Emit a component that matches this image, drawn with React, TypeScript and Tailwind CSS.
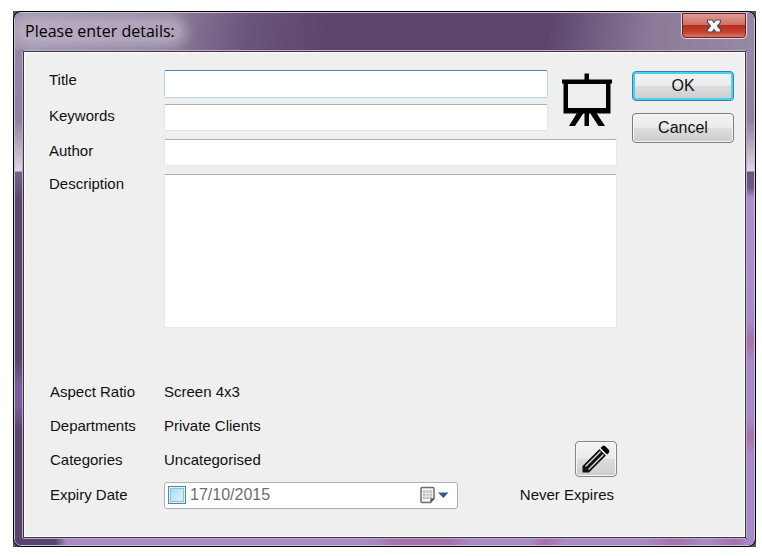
import { useState } from "react";
import type { ReactNode } from "react";

const fieldClass =
  "block w-full rounded-[2px] border border-[#e2e6ee] border-t-[#aeaeb6] bg-white px-1 text-[15px] text-black outline-none";

const buttonClass =
  "rounded-[4px] border bg-[linear-gradient(to_bottom,#f3f3f3_0%,#ebebeb_48%,#dcdcdc_52%,#cecece_100%)]";

function EaselIcon() {
  return (
    <svg viewBox="0 0 52 54" className="h-[54px] w-[52px]" aria-hidden="true">
      <path d="M23.500 0.500h4.500v6h23v4h-1.500v30h-47v-30H1v-4h22.500zM7 11v24h38V11z" fill="#000" fillRule="evenodd" />
      <path d="M23.500 40h4.500v13h-4.500zM16 40h6.500L14 53H8zM29 40h6.500l8.500 13h-6.500z" fill="#000" />
    </svg>
  );
}

function PencilIcon() {
  return (
    <svg viewBox="0 0 30 30" className="h-[30px] w-[30px]" aria-hidden="true">
      <path d="M1.500 28.500v-6.500L18.500 5l6.500 6.500L8 28.500z" fill="#111" />
      <path d="M4.500 22.500L19.500 7.500M7.500 25.500L22.500 10.500" stroke="#dedede" strokeWidth="1.300" />
      <path d="M19.500 4l2-2q1.500-1 3 .5l3 3q1.500 1.500 .5 3l-2 2z" fill="#000" />
      <path d="M18.800 4.500l6.700 6.700" stroke="#e8e8e8" strokeWidth="1.200" />
    </svg>
  );
}

function CalendarIcon() {
  return (
    <svg viewBox="0 0 30 18" className="h-[18px] w-[30px]" aria-hidden="true">
      <path d="M3 1.500h11q1 0 1 1v10l-3.500 4H3q-1 0-1-1v-13q0-1 1-1z" fill="#f4f4f4" stroke="#766b68" strokeWidth="1.500" />
      <path d="M4 4.500h9v8.500H4z" fill="#b5bdc9" />
      <path d="M4 7.300h9M4 10.200h9M7 4.500v8.500M10 4.500v8.500" stroke="#f4f6f8" strokeWidth=".8" />
      <path d="M15.500 12.500h-4v4.500z" fill="#574e4c" />
      <path d="M19 6.500h10.500L24.300 12z" fill="#3a5590" />
    </svg>
  );
}

function CloseIcon() {
  return (
    <svg viewBox="0 0 16 14" className="h-[14px] w-4" aria-hidden="true">
      <path
        d="M1.500 1h4.500L8 3.500 10 1h4.500v2.500L11.500 7l3 3.500V13H10L8 10.500 6 13H1.500v-2.500L4.500 7l-3-3.500z"
        fill="#f7f7f7"
        stroke="#565064"
        strokeWidth="1.200"
        strokeLinejoin="round"
      />
    </svg>
  );
}

function InfoRow({ label, children }: { label: string; children: ReactNode }) {
  return (
    <div className="flex h-[34px] items-center">
      <dt className="w-[114px] shrink-0">{label}</dt>
      <dd>{children}</dd>
    </div>
  );
}

export default function App() {
  const [hasExpiry, setHasExpiry] = useState(false);
  const [date, setDate] = useState("17/10/2015");

  return (
    <main className="min-h-screen bg-white pt-[11px] pr-[6px] pb-[9px] pl-[13px] font-['Liberation_Sans',Arial,sans-serif] text-[15px] text-[#111]">
      <div className="bg-[#55565a]">
        <section
          aria-labelledby="dialog-title"
          className="overflow-hidden rounded-[8px] border border-black bg-[#5c466d]"
        >
          <div className="overflow-hidden rounded-[7px] border border-[#c9c0d2]">
            <header className="flex h-[37px] items-start justify-between bg-[linear-gradient(100deg,#a093ae_0%,#8f809d_20%,#69547c_32%,#5c466d_42%,#5c466d_72%,#8b7b99_86%,#9788a6_100%)] pr-[7px]">
              <h1
                id="dialog-title"
                className="mt-[8px] ml-[4px] rounded-full bg-[#c5bccd]/60 px-[6px] font-['Open_Sans','Noto_Sans',sans-serif] text-[16px] leading-5 text-black shadow-[0_0_12px_6px_rgba(197,188,205,0.6)]"
              >
                Please enter details:
              </h1>
              <button
                type="button"
                aria-label="Close"
                className="flex h-[26px] w-[66px] items-center justify-center rounded-b-[5px] border border-t-0 border-[#f0d5d5] bg-[linear-gradient(to_bottom,#dfa095_0%,#cf7264_46%,#b8301d_50%,#c5402b_75%,#dc8068_100%)] shadow-[inset_0_0_0_1px_#5d2630]"
              >
                <CloseIcon />
              </button>
            </header>

            <div className="flex">
              <div className="w-[7px] shrink-0 bg-[linear-gradient(to_bottom,#9787a7_0,#9080a0_70px,#ddd7e2_121px,#75628a_122px,#5c446e_150px,#5a436c_310px,#7a5d9c_335px,#7a5d9c_355px,#5a436c_380px)]" />
              <div className="min-w-0 flex-1 rounded-[2px] border border-[#b9aec4]">
                <div className="border border-[#3d3246]">
                  <form
                    className="flex items-start border border-white bg-[#efefef] pt-[17px] pr-[10px] pb-[23px] pl-6"
                    onSubmit={(e) => e.preventDefault()}
                  >
                    <div className="min-w-0 flex-1">
                      <div className="flex">
                        <div className="min-w-0 flex-1">
                          <div className="mb-[6px] flex">
                            <label htmlFor="title" className="w-[115px] shrink-0 leading-5">
                              Title
                            </label>
                            <input
                              id="title"
                              type="text"
                              className="block h-7 w-full rounded-[2px] border border-[#b5d8e9] border-t-[#4a82b4] bg-white px-1 outline-none"
                            />
                          </div>
                          <div className="flex">
                            <label htmlFor="keywords" className="w-[115px] shrink-0 leading-6">
                              Keywords
                            </label>
                            <input id="keywords" type="text" className={`${fieldClass} h-[27px]`} />
                          </div>
                        </div>
                        <div className="flex w-[69px] shrink-0 justify-end pt-[3px] pr-1">
                          <EaselIcon />
                        </div>
                      </div>
                      <div className="mt-2 flex">
                        <label htmlFor="author" className="w-[115px] shrink-0 leading-6">
                          Author
                        </label>
                        <input id="author" type="text" className={`${fieldClass} h-[27px]`} />
                      </div>
                      <div className="mt-2 flex">
                        <label htmlFor="description" className="w-[115px] shrink-0 leading-5">
                          Description
                        </label>
                        <textarea id="description" className={`${fieldClass} h-[154px] resize-none`} />
                      </div>

                      <div className="mt-[47px] flex items-end justify-between pl-px">
                        <div>
                          <dl>
                            <InfoRow label="Aspect Ratio">Screen 4x3</InfoRow>
                            <InfoRow label="Departments">Private Clients</InfoRow>
                            <InfoRow label="Categories">Uncategorised</InfoRow>
                          </dl>
                          <div className="flex h-9 items-center">
                            <label htmlFor="expiry" className="w-[114px] shrink-0">
                              Expiry Date
                            </label>
                            <div className="flex h-[27px] w-[294px] items-center rounded-[3px] border border-[#b0b0b0] bg-white pr-2 pl-[3px]">
                              <input
                                type="checkbox"
                                aria-label="Set expiry date"
                                checked={hasExpiry}
                                onChange={(e) => setHasExpiry(e.target.checked)}
                                className="h-[18px] w-[18px] shrink-0 appearance-none border border-[#5586a3] bg-[linear-gradient(135deg,#a5d5f3,#e8f7fe)] shadow-[inset_0_0_0_1px_#dff2fc,inset_0_0_0_2px_#8cc4e6] checked:bg-[#3a7fb0]"
                              />
                              <input
                                id="expiry"
                                type="text"
                                value={date}
                                onChange={(e) => setDate(e.target.value)}
                                className="ml-1 min-w-0 flex-1 bg-transparent text-[16px] text-[#6d6d6d] outline-none"
                              />
                              <button type="button" aria-label="Open calendar">
                                <CalendarIcon />
                              </button>
                            </div>
                          </div>
                        </div>
                        <div className="flex flex-col items-end">
                          <button
                            type="button"
                            aria-label="Edit categories"
                            className={`${buttonClass} flex h-9 w-[42px] items-center justify-center border-[#858585] shadow-[inset_0_0_0_1px_#f8f8f8]`}
                          >
                            <PencilIcon />
                          </button>
                          <p className="flex h-9 items-center pr-[3px]">Never Expires</p>
                        </div>
                      </div>
                    </div>

                    <div className="ml-[15px] flex w-[102px] shrink-0 flex-col gap-3 pt-px">
                      <button
                        type="submit"
                        className={`${buttonClass} h-[30px] border-[#3b7fae] pb-px text-[16px] shadow-[inset_0_0_0_2px_#48d0f5]`}
                      >
                        OK
                      </button>
                      <button
                        type="button"
                        className={`${buttonClass} h-[30px] border-[#7c7c7c] pb-px text-[16px] shadow-[inset_0_0_0_1px_#f8f8f8]`}
                      >
                        Cancel
                      </button>
                    </div>
                  </form>
                </div>
              </div>
              <div className="w-[7px] shrink-0 bg-[linear-gradient(to_bottom,#9787a7_0,#9080a0_70px,#ddd7e2_121px,#66527b_122px,#705a85_138px,#ad91ce_148px,#a88aca_270px,#a670ac_290px,#a88aca_312px,#a88aca_370px,#a670ac_385px,#a88aca_405px)]" />
            </div>
            <div className="h-[6px] bg-[linear-gradient(to_right,#5a436c_0,#5a436c_40px,#a88aca_52px,#a88aca_355px,#a670ac_380px,#a670ac_435px,#a88aca_455px,#a88aca_515px,#a670ac_530px,#a88aca_550px,#a88aca_625px,#a670ac_660px,#a88aca_690px,#a670ac_720px,#a88aca_735px)]" />
          </div>
        </section>
      </div>
    </main>
  );
}
